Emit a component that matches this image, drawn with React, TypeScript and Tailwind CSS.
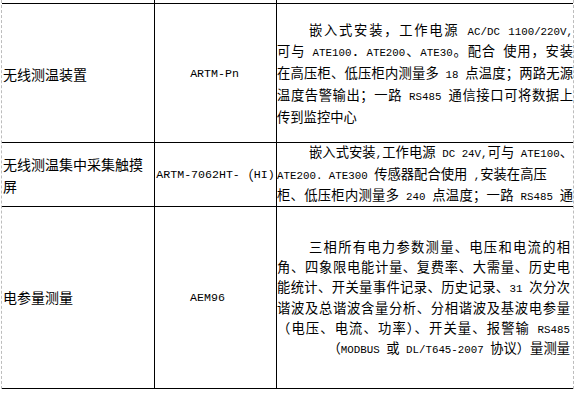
import React from 'react'

// latin runs use a narrow mono face so half-width chars sit at ~half the CJK width like the doc
function Mixed({ text, big }: { text: string; big?: boolean }) {
  const parts = text.split(/([\x20-\x7E]+)/)
  return (
    <>
      {parts.map((p, i) =>
        /^[\x20-\x7E]+$/.test(p) ? (
          <span
            key={i}
            className={`font-['Liberation_Mono'] leading-[0] ${big ? 'text-[11.6px]' : 'text-[10.8px]'}`}
          >
            {p}
          </span>
        ) : (
          p
        )
      )}
    </>
  )
}

function Line({ text, indent, last, right }: { text: string; indent?: boolean; last?: boolean; right?: boolean }) {
  return (
    <div
      className={`whitespace-nowrap ${indent ? 'pl-[32px]' : ''} ${
        right ? 'text-right' : last ? 'text-left' : 'text-justify [text-align-last:justify]'
      }`}
    >
      <Mixed text={text} />
    </div>
  )
}

export default function App() {
  return (
    <div className="w-[582px] h-[400px] bg-white pl-[1px] text-[14px] text-black font-['Noto_Sans_CJK_SC',sans-serif]">
      <div className="w-[573px] border-x border-dashed border-[#bdbdbd]">
        {/* tail of previous row */}
        <div className="grid grid-cols-[153px_122px_296px] h-[4px] border-b border-black">
          <div className="border-r border-black" />
          <div className="border-r border-black" />
          <div />
        </div>

        {/* row 1 */}
        <div className="grid grid-cols-[153px_122px_296px] h-[139px] border-b border-black">
          <div className="border-r border-black flex items-center pl-[1px] pt-[2px] leading-[22px]">无线测温装置</div>
          <div className="border-r border-black flex items-center justify-center pt-[2px] pr-[2px]">
            <Mixed big text="ARTM-Pn" />
          </div>
          <div className="flex flex-col justify-center text-[13.3px] leading-[21.7px]">
            <Line indent text="嵌入式安装，工作电源 AC/DC 1100/220V," />
            <Line text="可与 ATE100．ATE200、ATE30。配合 使用，安装" />
            <Line text="在高压柜、低压柜内测量多 18 点温度；两路无源" />
            <Line text="温度告警输出；一路 RS485 通信接口可将数据上" />
            <Line last text="传到监控中心" />
          </div>
        </div>

        {/* row 2 */}
        <div className="grid grid-cols-[153px_122px_296px] h-[64px] border-b border-black">
          <div className="border-r border-black flex items-center pl-[1px] leading-[22px]">
            无线测温集中采集触摸屏
          </div>
          <div className="border-r border-black flex items-center justify-center whitespace-nowrap">
            <Mixed big text="ARTM-7062HT-（HI)" />
          </div>
          <div className="overflow-hidden text-[13.3px] leading-[21.7px]">
            <div className="-mt-[2px]">
              <Line indent text="嵌入式安装,工作电源 DC 24V,可与 ATE100、" />
              <Line last text="ATE200. ATE300 传感器配合使用 ,安装在高压" />
              <Line text="柜、低压柜内测量多 240 点温度；一路 RS485 通" />
            </div>
          </div>
        </div>

        {/* row 3 */}
        <div className="grid grid-cols-[153px_122px_296px] h-[182px] border-b border-black">
          <div className="border-r border-black flex items-center pl-[1px]">电参量测量</div>
          <div className="border-r border-black flex items-center justify-center pr-[16px]">
            <Mixed big text="AEM96" />
          </div>
          <div className="flex flex-col justify-center pr-[3px] text-[13.3px] leading-[20.3px]">
            <Line indent text="三相所有电力参数测量、电压和电流的相" />
            <Line text="角、四象限电能计量、复费率、大需量、历史电" />
            <Line text="能统计、开关量事件记录、历史记录、31 次分次" />
            <Line text="谐波及总谐波含量分析、分相谐波及基波电参量" />
            <Line text="（电压、电流、功率）、开关量、报警输 RS485" />
            <Line right text="（MODBUS 或 DL/T645-2007 协议）量测量" />
          </div>
        </div>
      </div>
    </div>
  )
}
